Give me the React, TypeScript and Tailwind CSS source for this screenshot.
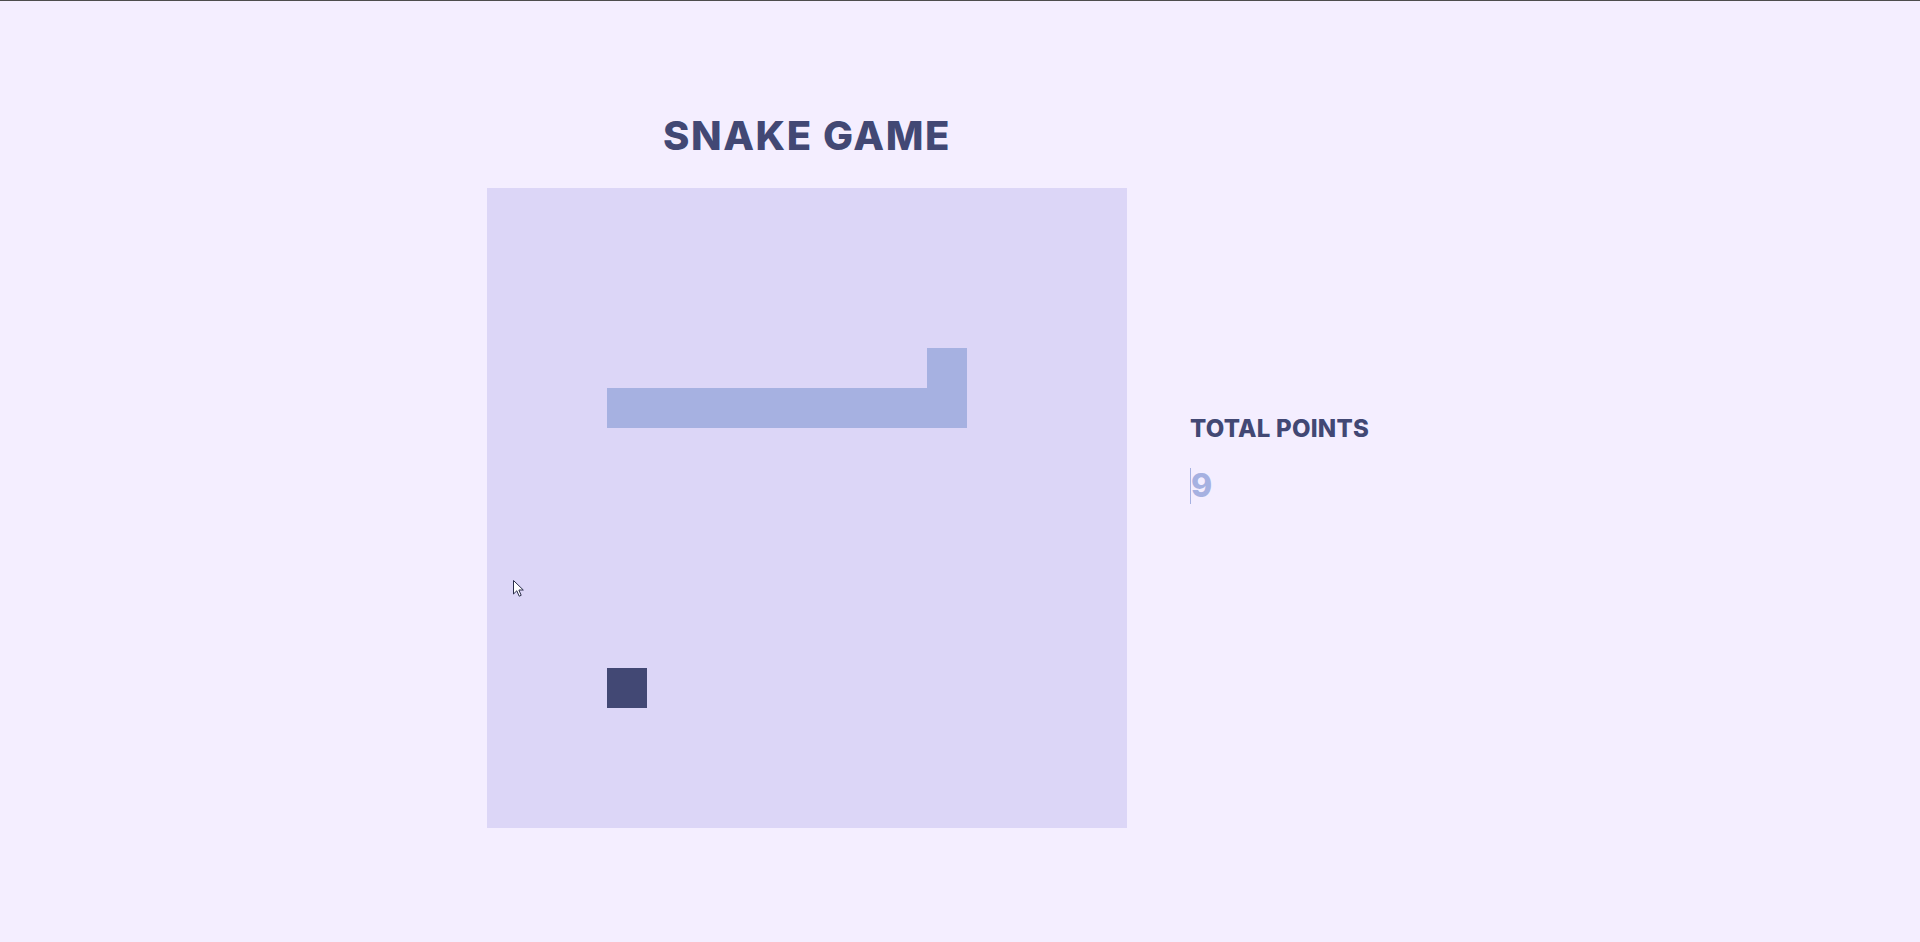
const snake = [
  { x: 11, y: 4 },
  { x: 11, y: 5 },
  { x: 10, y: 5 },
  { x: 9, y: 5 },
  { x: 8, y: 5 },
  { x: 7, y: 5 },
  { x: 6, y: 5 },
  { x: 5, y: 5 },
  { x: 4, y: 5 },
  { x: 3, y: 5 },
]
const food = { x: 3, y: 12 }

export default function App() {
  return (
    <div
      className="relative min-h-screen bg-[#f4eeff] border-t border-[#4d4d4d] overflow-hidden"
      style={{ fontFamily: "Inter, 'Noto Sans', sans-serif" }}
    >
      <div className="flex justify-center items-start pt-[111px]">
        {/* Board column */}
        <div className="flex flex-col items-center w-[640px]">
          <h1 className="text-[40px] leading-[48px] font-extrabold tracking-[0.04em] text-[#424874] mb-[28px]">
            SNAKE GAME
          </h1>
          <div className="grid grid-cols-[repeat(16,40px)] grid-rows-[repeat(16,40px)] w-[640px] h-[640px] bg-[#dcd6f7]">
            {snake.map((s, i) => (
              <div
                key={i}
                className="bg-[#a6b1e1]"
                style={{ gridColumn: s.x + 1, gridRow: s.y + 1 }}
              />
            ))}
            <div
              className="bg-[#424874]"
              style={{ gridColumn: food.x + 1, gridRow: food.y + 1 }}
            />
          </div>
        </div>

        {/* Score column */}
        <div className="w-[306px] pl-[63px] pt-[301px]">
          <div className="text-[24px] leading-[32px] font-extrabold tracking-[0.01em] text-[#424874] whitespace-nowrap">
            TOTAL POINTS
          </div>
          <div className="mt-[23px] flex items-center h-[36px]">
            <span className="w-px h-[36px] bg-[#a6b1e1]" />
            <span className="text-[32px] leading-[36px] font-extrabold text-[#a6b1e1]">9</span>
          </div>
        </div>
      </div>

      {/* mouse pointer */}
      <svg
        className="absolute left-[513px] top-[579px]"
        width="12"
        height="18"
        viewBox="0 0 12 18"
      >
        <path
          d="M0.5 0.5 L0.5 14 L3.8 10.8 L6.2 16.2 L8.2 15.3 L5.9 10 L10.3 10 Z"
          fill="#ffffff"
          stroke="#2a2d4a"
          strokeWidth="1"
          strokeLinejoin="round"
        />
      </svg>
    </div>
  )
}
